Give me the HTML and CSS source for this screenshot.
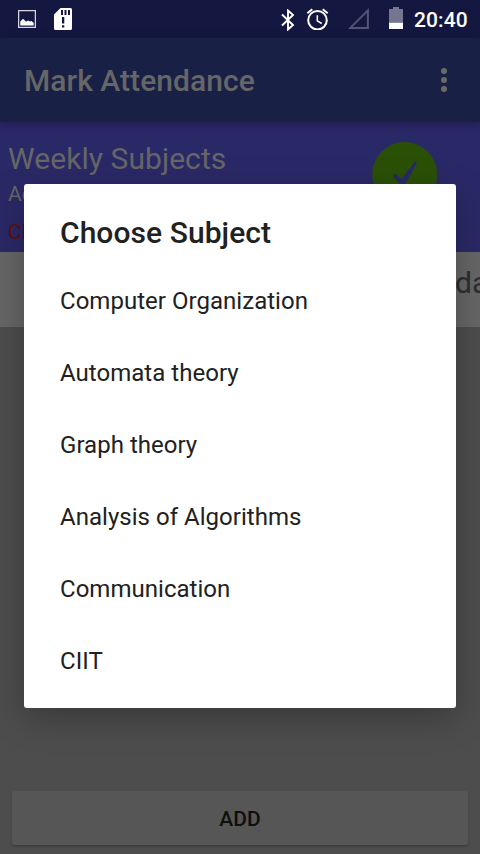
FILE: index.html
```html
<!DOCTYPE html>
<html lang="en">
<head>
<meta charset="utf-8">
<title>Mark Attendance</title>
<link rel="stylesheet" href="styles.css">
</head>
<body>
<div class="screen">
  <div class="status">
    <svg class="ic-picture" width="18" height="18" viewBox="0 0 18 18"><rect x=".6" y=".6" width="16.8" height="16.8" fill="none" stroke="#d5d6df" stroke-width="1.3"/><path d="M2.300 15.600v-4.200l2.700-2.600 3.200 3 1.800-1.200 2 1 1.500-.7 2.200 2v2.700z" fill="#fff"/></svg>
    <svg class="ic-sd" width="18" height="22" viewBox="0 0 18 22"><path fill="#fff" fill-rule="evenodd" d="M6.500 0H16.500a1.500 1.500 0 0 1 1.500 1.500v19a1.500 1.500 0 0 1-1.500 1.500h-15A1.500 1.500 0 0 1 0 20.500V6.500zM7 2v5h2V2zM10.500 2v5h2V2zM14 2v5h2V2zM8 9v6.500h2.300V9zM8 17.300v2.200h2.300v-2.200z"/></svg>
    <svg class="ic-bt" width="14" height="22" viewBox="0 0 14 22"><path d="M1 5.500L12 16l-5 4.500V1.500L12 6 1 16.500" fill="none" stroke="#fff" stroke-width="1.900"/></svg>
    <svg class="ic-alarm" width="22" height="22" viewBox="0 0 22 22"><g fill="none" stroke="#fff" stroke-width="2"><circle cx="10.500" cy="12.200" r="9.300"/><path d="M.300 5.200L5.300 1.300M20.700 5.200L15.700 1.300"/><path d="M10.300 7.200v5.600l4.400 2.700" stroke-width="1.500"/></g></svg>
    <svg class="ic-signal" width="21" height="21" viewBox="0 0 21 21"><path d="M2.400 19.900L19.900 2.400v17.500z" fill="none" stroke="#535675" stroke-width="2"/></svg>
    <svg class="ic-battery" width="14" height="22" viewBox="0 0 14 22"><path d="M4 0h6v2h4v13.700H0V2h4z" fill="#747690"/><path d="M0 15.700h14V22H0z" fill="#fff"/></svg>
    <span class="clock">20:40</span>
  </div>
  <header class="toolbar">
    <h1>Mark Attendance</h1>
    <svg width="6" height="24" viewBox="0 0 6 24"><g fill="#6b6a66"><circle cx="3" cy="3" r="3"/><circle cx="3" cy="12" r="3"/><circle cx="3" cy="21" r="3"/></g></svg>
  </header>
  <section class="summary">
    <div class="summary-text">
      <div class="heading">Weekly Subjects</div>
      <div class="note">Ac</div>
      <div class="note alert">Cl</div>
    </div>
    <svg class="check" width="66" height="66" viewBox="0 0 66 66"><circle cx="32.700" cy="33.500" r="32.500" fill="#2a5006"/><path d="M22 33.500q2-.7 3 .7l3.800 3.300q.8.500 1.500-.4L42.300 21.300q1-1.200 2-.6.700.5.100 2L32 45.500q-1.500 1.500-3-.5l-7.500-9.500q-.3-1.500.5-2z" fill="#2a2967"/></svg>
  </section>
  <section class="day-row">da</section>
  <main class="content"></main>
  <button class="add">ADD</button>
  <div class="dialog">
    <h2>Choose Subject</h2>
    <ul>
      <li>Computer Organization</li>
      <li>Automata theory</li>
      <li>Graph theory</li>
      <li>Analysis of Algorithms</li>
      <li>Communication</li>
      <li>CIIT</li>
    </ul>
  </div>
</div>
</body>
</html>
```
FILE: styles.css
```css
* { box-sizing: border-box; }
body { margin: 0; font-family: Roboto, sans-serif; }
h1, h2, ul { margin: 0; padding: 0; }
svg { display: block; flex: none; }
.screen {
  position: relative;
  display: flex;
  flex-direction: column;
  width: 480px;
  height: 854px;
  overflow: hidden;
  background: #4d4d4d;
}
.status {
  display: flex;
  align-items: flex-start;
  flex: none;
  height: 38px;
  padding-left: 18px;
  background: #141840;
}
.ic-picture { margin-top: 10px; }
.ic-sd { margin: 8px 0 0 18px; }
.ic-bt { margin: 9px 0 0 209px; }
.ic-alarm { margin: 8px 0 0 12px; }
.ic-signal { margin: 8px 0 0 19px; }
.ic-battery { margin: 7px 0 0 20px; }
.clock {
  margin: 8px 0 0 11px;
  color: #fff;
  font-size: 21px;
  font-weight: 500;
  line-height: 24px;
  letter-spacing: .1px;
}
.toolbar {
  position: relative;
  display: flex;
  align-items: center;
  justify-content: space-between;
  flex: none;
  height: 84px;
  padding: 0 33px 0 24px;
  background: #192046;
  box-shadow: 0 3px 9px rgba(20, 10, 50, .4);
}
.toolbar h1 {
  padding-top: 2px;
  color: #666;
  font-size: 30px;
  font-weight: 500;
  line-height: 36px;
  letter-spacing: .05px;
}
.summary {
  display: flex;
  justify-content: space-between;
  flex: none;
  height: 130px;
  padding: 19px 42px 0 8px;
  background: #2a2967;
  color: #666;
}
.heading { font-size: 30px; line-height: 36px; letter-spacing: .06px; }
.note { margin-top: 4px; font-size: 21px; line-height: 26px; }
.alert { margin-top: 12px; color: #650f10; }
.day-row {
  flex: none;
  height: 75px;
  padding: 13px 0 0 455px;
  background: #666;
  color: #2d2d2d;
  font-size: 30px;
  line-height: 36px;
}
.content { flex: 1; }
.add {
  flex: none;
  height: 54px;
  margin: 0 12px 9px;
  padding: 2px 0 0;
  border: 0;
  border-radius: 3px;
  background: #565656;
  box-shadow: 0 2px 2px rgba(0, 0, 0, .2);
  color: #0e0e0e;
  font: 500 21px/52px Roboto, sans-serif;
}
.dialog {
  position: absolute;
  top: 184px;
  left: 24px;
  width: 432px;
  height: 524px;
  padding: 27px 36px 0;
  border-radius: 3px;
  background: #fff;
  box-shadow: 0 10px 34px rgba(0, 0, 0, .27);
  color: #212121;
}
.dialog h2 {
  margin-bottom: 18px;
  font-size: 30px;
  font-weight: 500;
  line-height: 44px;
  letter-spacing: .06px;
}
.dialog ul { margin-top: -8px; list-style: none; }
.dialog li { height: 72px; font-size: 24px; line-height: 72px; letter-spacing: .03px; }
```
